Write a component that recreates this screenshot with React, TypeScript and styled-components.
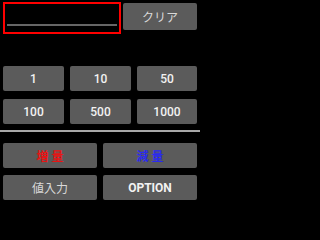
import styled, { createGlobalStyle } from "styled-components"

const Global = createGlobalStyle`
   html, body {
      margin: 0;
      padding: 0;
      background: #000;
   }
   body {
      font-family: Roboto, "Noto Sans CJK JP", sans-serif;
   }
`

const Screen = styled.div`
   width: 200px;
   height: 204px;
   background: #000;
   display: flex;
   flex-direction: column;
   overflow: hidden;
`

const TopRow = styled.div`
   display: flex;
   align-items: flex-start;
   gap: 2px;
   padding: 2px 3px 0 3px;
`

const InputBox = styled.div`
   box-sizing: border-box;
   width: 118px;
   height: 32px;
   border: 2px solid #ff0000;
   padding: 0 2px 6px 2px;
   display: flex;
   flex-direction: column;
   justify-content: flex-end;
`

const Underline = styled.div`
   height: 2px;
   background: #666;
`

const Button = styled.button<{ $color?: string; $weight?: number }>`
   box-sizing: border-box;
   margin: 0;
   padding: 0;
   border: none;
   border-radius: 2px;
   background: #5b5b5b;
   color: ${p => p.$color ?? "#f2f2f2"};
   font-family: Roboto, "Noto Sans CJK JP", sans-serif;
   font-size: 12px;
   font-weight: ${p => p.$weight ?? 500};
   display: flex;
   align-items: center;
   justify-content: center;
   white-space: pre;
`

const ClearButton = styled(Button)`
   width: 74px;
   height: 27px;
   margin-top: 1px;
`

const Pad = styled.div`
   display: grid;
   grid-template-columns: 61px 61px 60px;
   grid-auto-rows: 25px;
   column-gap: 6px;
   row-gap: 8px;
   padding: 0 3px;
   margin-top: 32px;
`

const Divider = styled.div`
   height: 2px;
   background: #a8a8a8;
   margin-top: 6px;
`

const Actions = styled.div`
   display: grid;
   grid-template-columns: 94px 94px;
   grid-auto-rows: 25px;
   column-gap: 6px;
   row-gap: 7px;
   padding: 0 3px;
   margin-top: 11px;
`

const amounts = ["1", "10", "50", "100", "500", "1000"]

export default function App() {
   return <>
      <Global />
      <Screen>
         <TopRow>
            <InputBox>
               <Underline />
            </InputBox>
            <ClearButton $color="#d8d8d8" $weight={400}>クリア</ClearButton>
         </TopRow>
         <Pad>
            {amounts.map(a => <Button key={a}>{a}</Button>)}
         </Pad>
         <Divider />
         <Actions>
            <Button $color="#e81414" $weight={700}>増 量</Button>
            <Button $color="#2a2af0" $weight={700}>減 量</Button>
            <Button $color="#d8d8d8" $weight={400}>値入力</Button>
            <Button $weight={700}>OPTION</Button>
         </Actions>
      </Screen>
   </>
}
